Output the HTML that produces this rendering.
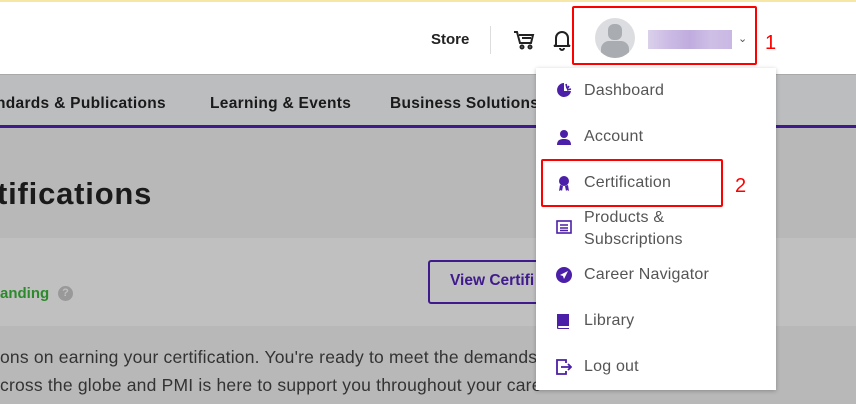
<!DOCTYPE html>
<html><head><meta charset="utf-8"><style>
*{margin:0;padding:0;box-sizing:border-box}
body{width:856px;height:404px;overflow:hidden;position:relative;font-family:"Liberation Sans",sans-serif;background:#b8b8b8}
.abs{position:absolute}
.hdr{left:0;top:0;width:856px;height:75px;background:#fff;border-top:2px solid #f6e7a6;border-bottom:1px solid #a9a9a9}
.nav{left:0;top:75px;width:856px;height:53px;background:#bcbdbf;border-bottom:3px solid #3e1a8c}
.nav span{position:absolute;top:20px;font-weight:bold;font-size:15.5px;letter-spacing:.3px;color:#1a1a1a;white-space:nowrap}
.card{left:0;top:238px;width:856px;height:88px;background:#c0c0c0}
.menu{left:536px;top:68px;width:240px;height:322px;background:#fff;box-shadow:0 1px 4px rgba(0,0,0,.25)}
.item{position:absolute;left:48px;font-size:16px;letter-spacing:.2px;color:#555;line-height:22px}
.ic{position:absolute;left:20px}
.red{position:absolute;border:2px solid #f00;border-radius:2px}
.num{position:absolute;color:#f00;font-size:20px}
</style></head><body>
<div class="abs hdr">
  <div class="abs" style="left:431px;top:29px;font-weight:bold;font-size:15px;color:#222">Store</div>
  <div class="abs" style="left:490px;top:24px;width:1px;height:28px;background:#ddd"></div>
  <svg class="abs" style="left:513px;top:28px" width="22" height="20" viewBox="0 0 22 20" fill="none" stroke="#222" stroke-width="2"><path d="M1 2h3l3 11h11l2-8H6"/><path d="M9 8h9"/><circle cx="9" cy="17" r="1.5"/><circle cx="17" cy="17" r="1.5"/></svg>
  <svg class="abs" style="left:552px;top:27px" width="20" height="22" viewBox="0 0 20 22" fill="none" stroke="#222" stroke-width="2"><path d="M4 16V9a6 6 0 0 1 12 0v7l2 1H2z"/><path d="M8 19a2 2 0 0 0 4 0"/></svg>
  <div class="abs" style="left:595px;top:16px;width:40px;height:40px;border-radius:50%;background:#dcdde0;overflow:hidden">
    <div class="abs" style="left:13px;top:6px;width:14px;height:16px;border-radius:6px;background:#a9acb1"></div>
    <div class="abs" style="left:6px;top:23px;width:28px;height:20px;border-radius:8px 8px 0 0;background:#a9acb1"></div>
  </div>
  <div class="abs" style="left:648px;top:28px;width:84px;height:19px;background:linear-gradient(90deg,#d7cbe8,#c6b3e2,#b9a3db,#c8b8e3,#c4b0e0);opacity:.9"></div>
  <div class="abs" style="left:738px;top:30px;font-size:11px;color:#555">&#8964;</div>
</div>
<div class="red" style="left:572px;top:6px;width:185px;height:59px"></div>
<div class="num" style="left:765px;top:32px">1</div>
<div class="abs nav">
  <span style="left:-4px">ndards &amp; Publications</span>
  <span style="left:210px">Learning &amp; Events</span>
  <span style="left:390px">Business Solutions</span>
</div>
<div class="abs" style="left:-3px;top:176px;font-weight:bold;font-size:31px;letter-spacing:.8px;color:#1a1a1a">tifications</div>
<div class="abs card">
  <div class="abs" style="left:0;top:47px;font-weight:bold;font-size:15px;color:#2c8a2c">anding</div>
  <div class="abs" style="left:58px;top:48px;width:15px;height:15px;border-radius:50%;background:#999;color:#c0c0c0;font-size:11px;font-weight:bold;text-align:center;line-height:15px">?</div>
  <div class="abs" style="left:428px;top:22px;width:130px;height:44px;border:2px solid #3e1a8c;border-radius:3px"></div>
  <div class="abs" style="left:450px;top:34px;font-weight:bold;font-size:15.5px;color:#3e1a8c">View Certifi</div>
</div>
<div class="abs" style="left:0;top:343px;font-size:17.5px;letter-spacing:.2px;color:#333;white-space:nowrap;line-height:28px">ons on earning your certification. You're ready to meet the demands<br>cross the globe and PMI is here to support you throughout your care</div>
<div class="abs menu">
  <svg class="ic" style="top:14px" width="16" height="16" viewBox="0 0 16 16"><path d="M8 1a7 7 0 1 0 7 8H8z" fill="#4b1fa8"/><path d="M10 2l1 4M13 4l-2 3M15 7l-4 1" stroke="#4b1fa8" stroke-width="1.6"/></svg>
  <div class="item" style="top:12px">Dashboard</div>
  <svg class="ic" style="top:61px" width="16" height="16" viewBox="0 0 16 16" fill="#4b1fa8"><circle cx="8" cy="5" r="4"/><path d="M1 16c0-5 3-6 7-6s7 1 7 6z"/></svg>
  <div class="item" style="top:58px">Account</div>
  <svg class="ic" style="top:106px" width="16" height="18" viewBox="0 0 16 18" fill="#4b1fa8"><circle cx="8" cy="7" r="5"/><path d="M4 11l-1 6 2-1 1 1 1-5zM12 11l1 6-2-1-1 1-1-5z"/></svg>
  <div class="item" style="top:104px">Certification</div>
  <svg class="ic" style="top:152px" width="16" height="14" viewBox="0 0 16 14" fill="none" stroke="#4b1fa8" stroke-width="1.6"><rect x="1" y="1" width="14" height="12"/><path d="M4 5h8M4 8h8M4 10.5h8"/></svg>
  <div class="item" style="top:139px">Products &amp;<br>Subscriptions</div>
  <svg class="ic" style="top:199px" width="16" height="16" viewBox="0 0 16 16"><circle cx="8" cy="8" r="8" fill="#4b1fa8"/><path d="M12 4L4 8l3 1 1 3z" fill="#fff"/></svg>
  <div class="item" style="top:196px">Career Navigator</div>
  <svg class="ic" style="top:245px" width="14" height="16" viewBox="0 0 14 16" fill="#4b1fa8"><path d="M1 1h12v12H3a1 1 0 0 0 0 2h10v1H2a1 1 0 0 1-1-1z"/></svg>
  <div class="item" style="top:242px">Library</div>
  <svg class="ic" style="top:291px" width="16" height="16" viewBox="0 0 16 16" fill="none" stroke="#4b1fa8" stroke-width="1.8"><path d="M10 4V1H1v14h9v-3"/><path d="M5 8h10M12 5l3 3-3 3"/></svg>
  <div class="item" style="top:288px">Log out</div>
</div>
<div class="red" style="left:541px;top:159px;width:182px;height:48px"></div>
<div class="num" style="left:735px;top:175px">2</div>
</body></html>
